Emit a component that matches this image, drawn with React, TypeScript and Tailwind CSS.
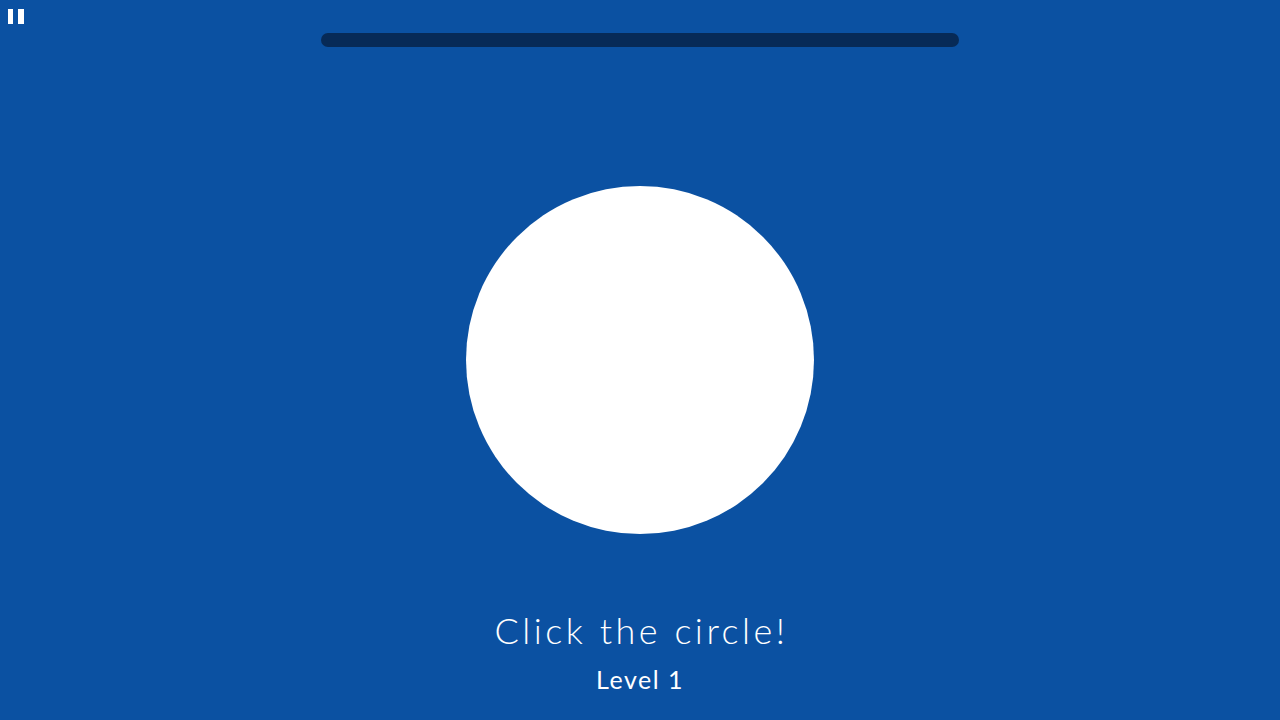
import React from "react";

export default function App() {
  return (
    <div className="relative w-full h-[720px] bg-[#0b51a2] overflow-hidden flex flex-col items-center" style={{ fontFamily: "Lato, 'Open Sans', sans-serif" }}>
      <div className="absolute left-[8px] top-[9px] flex gap-[5px]">
        <div className="w-[5px] h-[15px] bg-white" />
        <div className="w-[6px] h-[15px] bg-white" />
      </div>
      <div className="mt-[33px] w-[638px] h-[14px] rounded-full bg-[#072a57]" />
      <div className="mt-[139px] w-[348px] h-[348px] rounded-full bg-white" />
      <div className="mt-[74px] text-white text-[36px] font-light leading-[44px] tracking-[3.5px] pl-[3px]">Click the circle!</div>
      <div className="mt-[11px] text-white text-[25px] leading-[32px] tracking-[1.5px]">Level 1</div>
    </div>
  );
}
